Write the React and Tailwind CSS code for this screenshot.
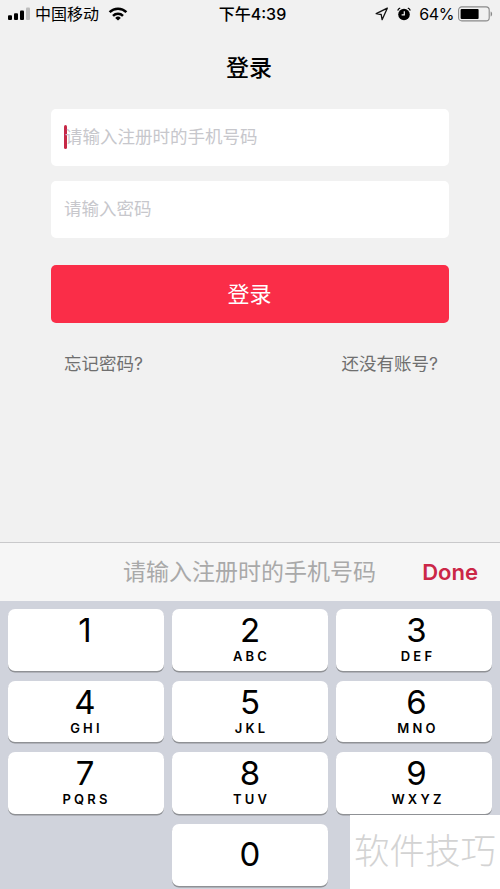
const keyRows = [
  [
    { digit: "1", letters: "" },
    { digit: "2", letters: "ABC" },
    { digit: "3", letters: "DEF" },
  ],
  [
    { digit: "4", letters: "GHI" },
    { digit: "5", letters: "JKL" },
    { digit: "6", letters: "MNO" },
  ],
  [
    { digit: "7", letters: "PQRS" },
    { digit: "8", letters: "TUV" },
    { digit: "9", letters: "WXYZ" },
  ],
];

// labels sit slightly off centre in the outer columns
const columnPadding = ["pr-[2px]", "", "pl-[5px]"];

const SignalIcon = () => (
  <svg width="23" height="14" viewBox="0 0 23 14">
    <rect x="0" y="8.3" width="4" height="4.7" rx="1" fill="#000" />
    <rect x="6" y="6.3" width="4" height="6.7" rx="1" fill="#000" />
    <rect x="12" y="3.5" width="4" height="9.5" rx="1" fill="#000" />
    <rect x="18" y="0.5" width="4" height="12.5" rx="1" fill="#bdbdbd" />
  </svg>
);

const WifiIcon = () => (
  <svg width="20" height="14" viewBox="0 0 20 14" fill="none" stroke="#000" strokeWidth="2.5">
    <path d="M1.6 5.2a12 12 0 0 1 16.8 0" />
    <path d="M5 8.8a7.1 7.1 0 0 1 10 0" />
    <path d="M10 13.6 7.2 10.9a4 4 0 0 1 5.6 0Z" fill="#000" stroke="none" />
  </svg>
);

const LocationIcon = () => (
  <svg width="14" height="14" viewBox="0 0 14 14" fill="none" stroke="#111" strokeWidth="1.3" strokeLinejoin="round">
    <path d="M12.3 1.2 1.2 6.7l5 .8.9 5.2z" />
  </svg>
);

const AlarmIcon = () => (
  <svg width="14" height="14" viewBox="0 0 14 14" fill="none">
    <circle cx="7" cy="7.5" r="5.8" fill="#000" />
    <path d="M.7 3.4A4.5 4.5 0 0 1 3.2 1M13.3 3.4A4.5 4.5 0 0 0 10.8 1" stroke="#000" strokeWidth="1.3" />
    <path d="M7.3 4.2v3.6H4.6" stroke="#f1f1f1" strokeWidth="1.2" />
  </svg>
);

const BatteryIcon = () => (
  <svg width="36" height="16" viewBox="0 0 36 16">
    <rect x="0.6" y="0.9" width="30.6" height="14" rx="3.2" fill="none" stroke="#8a8a8a" strokeWidth="1.1" />
    <rect x="2.6" y="2.9" width="18" height="10" rx="1" fill="#000" />
    <path d="M32.6 5.4c2 .6 2 4.4 0 5z" fill="#8a8a8a" />
  </svg>
);

const Key = ({ digit, letters, center, pad }) => (
  <button
    className={`flex h-[61.5px] flex-col items-center rounded-[7px] bg-white text-black shadow-[0_1.5px_0_#8f9195] ${
      center ? "justify-center" : ""
    } ${pad || ""}`}>
    <span className={`text-[33px] leading-[40px] ${center ? "-mt-px" : "mt-px"}`}>{digit}</span>
    {letters && (
      <span className="-mt-px pl-[3px] text-[13px] leading-[14px] font-semibold tracking-[3.2px]">{letters}</span>
    )}
  </button>
);

const StatusBar = () => (
  <div className="grid h-7 grid-cols-3 items-center pr-[6px] pl-2 text-[16px] leading-7 text-black">
    <div className="flex items-center">
      <SignalIcon />
      <span className="ml-1">中国移动</span>
      <span className="ml-[9px]">
        <WifiIcon />
      </span>
    </div>
    <div className="pl-[3px] text-center font-medium whitespace-nowrap">下午4:39</div>
    <div className="flex items-center justify-end">
      <LocationIcon />
      <span className="ml-2">
        <AlarmIcon />
      </span>
      <span className="ml-[8px] tracking-[-0.4px]">64%</span>
      <span className="ml-1">
        <BatteryIcon />
      </span>
    </div>
  </div>
);

const App = () => {
  return (
    <div className="relative flex h-[889px] w-[500px] flex-col overflow-hidden bg-[#f1f1f1] font-['Inter','Noto_Sans_CJK_SC',sans-serif]">
      <StatusBar />

      {/* Login form */}
      <main className="flex flex-1 flex-col px-[51px]">
        <h1 className="mt-[20px] -ml-[2px] text-center text-[23px] leading-10 font-medium text-black">登录</h1>

        <div className="mt-[21px] flex h-[57px] items-center rounded-[5px] bg-white pb-px pl-[13px]">
          <span className="h-6 w-[3px] rounded-full bg-[#c62846]" />
          <span className="-ml-[2px] text-[17.5px] leading-6 text-[#c7c7cc]">请输入注册时的手机号码</span>
        </div>
        <div className="mt-[15px] flex h-[57px] items-center rounded-[5px] bg-white pb-[2px] pl-[13px]">
          <span className="text-[17.5px] leading-6 text-[#c7c7cc]">请输入密码</span>
        </div>

        <button className="mt-[27px] h-[58px] rounded-[5px] bg-[#fa2d48] pr-px text-[22px] text-white">登录</button>

        <div className="mt-[29px] flex justify-between pr-[11px] pl-[13px] text-[17.5px] leading-6 text-[#6f6f6f]">
          <span>忘记密码?</span>
          <span>还没有账号?</span>
        </div>
      </main>

      {/* Keyboard toolbar */}
      <div className="relative flex h-[59px] items-center justify-center border-t border-[#c9c9cb] bg-[#f6f6f6]">
        <span className="pr-px text-[23px] leading-8 text-[#a9a9a9]">请输入注册时的手机号码</span>
        <button className="absolute right-[22px] text-[22px] font-semibold text-[#cb2747]">Done</button>
      </div>

      {/* Number pad */}
      <div className="flex h-[288px] flex-col gap-[10.2px] bg-[#d0d3dc] px-2 pt-2">
        {keyRows.map((row) => (
          <div key={row[0].digit} className="grid grid-cols-3 gap-2">
            {row.map((k, i) => (
              <Key key={k.digit} digit={k.digit} letters={k.letters} pad={columnPadding[i]} />
            ))}
          </div>
        ))}
        <div className="grid grid-cols-3 gap-2">
          <span />
          <Key digit="0" center />
        </div>
      </div>

      {/* Corner mark */}
      <div className="absolute right-0 bottom-0 flex h-[74px] w-[150px] items-center justify-center bg-white pb-px text-[35.5px] font-light whitespace-nowrap text-[#d3d3d3]">
        软件技巧
      </div>
    </div>
  );
};

export default App;
